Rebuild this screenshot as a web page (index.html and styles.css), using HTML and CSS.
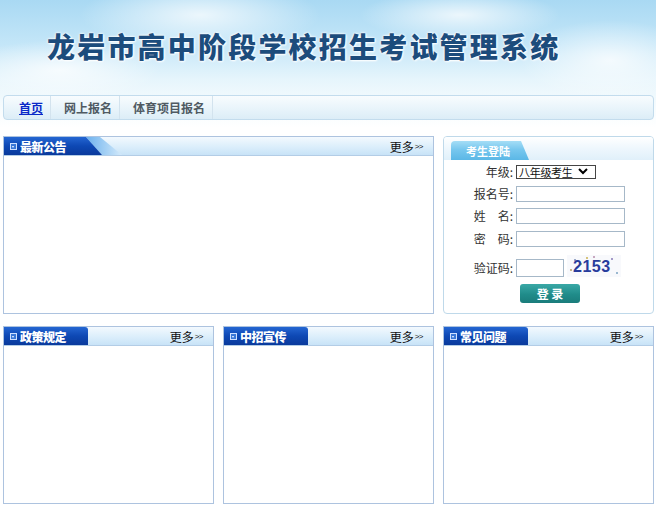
FILE: index.html
```html
<!DOCTYPE html>
<html lang="zh-CN">
<head>
<meta charset="utf-8">
<title>龙岩市高中阶段学校招生考试管理系统</title>
<link rel="stylesheet" href="styles.css">
</head>
<body>
<div class="top">
  <div class="banner">
    <span class="cloud c1"></span><span class="cloud c2"></span><span class="cloud c3"></span><span class="cloud c4"></span>
    <h1 class="title">龙岩市高中阶段学校招生考试管理系统</h1>
  </div>
  <div class="nav">
    <a class="nav-item active" href="#">首页</a>
    <a class="nav-item" href="#">网上报名</a>
    <a class="nav-item" href="#">体育项目报名</a>
  </div>
</div>

<div class="main">
  <div class="box wide">
    <div class="box-head">
      <span class="tab tab-slant"><i class="ico"></i>最新公告</span>
      <span class="stripe"></span>
      <a class="more" href="#">更多<small>&gt;&gt;</small></a>
    </div>
    <div class="box-body"></div>
  </div>

  <div class="login">
    <div class="login-head"><span class="login-tab">考生登陆</span></div>
    <form class="login-form">
      <div class="row r1"><label>年级:</label><span class="sel"><span class="sel-text">八年级考生</span><svg class="chev" viewBox="0 0 10 7" width="10" height="7"><path d="M1 1 L5 5 L9 1" fill="none" stroke="#000" stroke-width="2"/></svg></span></div>
      <div class="row r2"><label>报名号:</label><input class="txt" type="text"></div>
      <div class="row r3"><label>姓&emsp;名:</label><input class="txt" type="text"></div>
      <div class="row r4"><label>密&emsp;码:</label><input class="txt" type="password"></div>
      <div class="row code-row"><label>验证码:</label><input class="txt short" type="text"><span class="captcha">2153</span></div>
      <div class="btn-row"><button class="btn" type="button">登 录</button></div>
    </form>
  </div>

  <div class="box">
    <div class="box-head">
      <span class="tab"><i class="ico"></i>政策规定</span>
      <a class="more" href="#">更多<small>&gt;&gt;</small></a>
    </div>
    <div class="box-body"></div>
  </div>
  <div class="box">
    <div class="box-head">
      <span class="tab"><i class="ico"></i>中招宣传</span>
      <a class="more" href="#">更多<small>&gt;&gt;</small></a>
    </div>
    <div class="box-body"></div>
  </div>
  <div class="box">
    <div class="box-head">
      <span class="tab"><i class="ico"></i>常见问题</span>
      <a class="more" href="#">更多<small>&gt;&gt;</small></a>
    </div>
    <div class="box-body"></div>
  </div>
</div>
</body>
</html>
```
FILE: styles.css
```css
* { box-sizing: border-box; }
body {
  margin: 0;
  background: #ffffff;
  font-family: "Noto Sans CJK SC", "Liberation Sans", sans-serif;
  font-size: 12px;
  color: #333;
}
.top {
  position: relative;
  height: 128px;
  background: linear-gradient(180deg, #a9d9f3 0%, #c4e6f8 35%, #e6f5fc 62%, #f7fcfe 85%, #ffffff 100%);
  overflow: hidden;
}
.banner {
  position: relative;
  height: 94px;
}
.cloud {
  position: absolute;
  border-radius: 50%;
  background: radial-gradient(closest-side, rgba(255,255,255,0.75), rgba(255,255,255,0));
}
.c1 { left: 80px; top: -20px; width: 240px; height: 70px; }
.c2 { left: 360px; top: -10px; width: 200px; height: 50px; }
.c3 { left: 520px; top: 20px; width: 180px; height: 80px; }
.c4 { left: -40px; top: 40px; width: 200px; height: 60px; }
.title {
  position: relative;
  margin: 0;
  padding: 29px 0 0 47px;
  font-size: 28px;
  line-height: 35px;
  font-weight: 900;
  letter-spacing: 2.2px;
  color: #1c4c7c;
  text-shadow: 0 0 2px #fff, 0 0 3px #fff, 1px 1px 2px rgba(255,255,255,0.9);
  white-space: nowrap;
}
.nav {
  position: relative;
  margin: 1px 2px 0 3px;
  height: 25px;
  display: flex;
  align-items: center;
  padding-left: 3px;
  border: 1px solid #c3dced;
  border-radius: 4px;
  background: linear-gradient(180deg, #f8fcfe 0%, #eaf5fb 50%, #dcedf7 100%);
}
.nav-item {
  height: 23px;
  line-height: 23px;
  padding: 0 7px 0 12px;
  font-size: 12px;
  font-weight: 700;
  color: #4f5a63;
  text-decoration: none;
  border-right: 1px solid #d3e3ee;
}
.nav-item + .nav-item { padding: 0 7px 0 13px; }
.nav-item.active {
  color: #0a29c8;
  text-decoration: underline;
  padding: 0 7px 0 12px;
}
.main {
  width: 651px;
  margin: 8px 0 0 3px;
  display: grid;
  grid-template-columns: 211px 211px 211px;
  column-gap: 9px;
  row-gap: 12px;
}
.box {
  height: 178px;
  border: 1px solid #adc3df;
  background: #fff;
  display: flex;
  flex-direction: column;
}
.box.wide { grid-column: span 2; }
.box-head {
  position: relative;
  height: 19px;
  flex: none;
  display: flex;
  align-items: stretch;
  background: linear-gradient(180deg, #f3f9fe 0%, #dbeefb 55%, #c8e3f7 100%);
  border-bottom: 1px solid #b3cde6;
}
.tab {
  position: relative;
  z-index: 2;
  display: flex;
  align-items: center;
  width: 84px;
  padding-left: 6px;
  color: #fff;
  font-weight: 900;
  font-size: 12px;
  background: linear-gradient(180deg, #2466d2 0%, #0e48b4 50%, #0a3a9c 100%);
  border-top-right-radius: 3px;
  letter-spacing: -0.5px;
}
.tab-slant {
  width: 98px;
  border-radius: 0;
  clip-path: polygon(0 0, 82px 0, 98px 100%, 0 100%);
}
.stripe {
  position: absolute;
  z-index: 1;
  left: 82px;
  top: 0;
  width: 36px;
  height: 100%;
  background: linear-gradient(90deg, #6db1ee, #a9d3f5 60%, #d4eafb);
  clip-path: polygon(0 0, 14px 0, 36px 100%, 16px 100%);
}
.ico {
  display: inline-block;
  width: 7px;
  height: 7px;
  margin-right: 3px;
  border: 1px solid #cfe0ff;
  background: #3a78d8;
  position: relative;
}
.ico::after {
  content: "";
  position: absolute;
  left: 1px;
  top: 2px;
  border-left: 1.5px solid transparent;
  border-right: 1.5px solid transparent;
  border-top: 2px solid #fff;
}
.more {
  margin-left: auto;
  padding-right: 10px;
  display: flex;
  align-items: center;
  color: #111;
  text-decoration: none;
  font-size: 12px;
}
.more small {
  font-family: "Liberation Sans", sans-serif;
  font-size: 8px;
  margin-left: 1px;
  letter-spacing: -0.5px;
}
.box-body { flex: 1; }

.login {
  height: 178px;
  border: 1px solid #bfd9ea;
  border-radius: 4px;
  background: #fff;
  overflow: hidden;
}
.login-head {
  height: 23px;
  padding: 4px 0 0 7px;
  background: linear-gradient(180deg, #ffffff 0%, #eef7fd 50%, #e0f0fa 100%);
}
.login-tab {
  display: block;
  width: 78px;
  height: 19px;
  line-height: 20px;
  padding-left: 15px;
  color: #fff;
  font-size: 11px;
  font-weight: 700;
  border-radius: 4px 4px 0 0;
  background: linear-gradient(180deg, #a4ddf6 0%, #77c7ee 45%, #5bb7e6 100%);
  clip-path: polygon(0 0, 70px 0, 78px 100%, 0 100%);
}
.login-form {
  display: flex;
  flex-direction: column;
  padding-top: 4px;
}
.row {
  display: flex;
  align-items: center;
  height: 16px;
}
.row label {
  width: 72px;
  text-align: right;
  padding-right: 3px;
  font-size: 12px;
  line-height: 16px;
  color: #333;
}
.r1 { height: 15px; margin-bottom: 7px; }
.r2 { margin-bottom: 6px; }
.r3 { margin-bottom: 7px; }
.r4 { margin-bottom: 12px; }
.sel {
  display: flex;
  align-items: center;
  width: 80px;
  height: 14px;
  padding: 0 0 0 2px;
  border: 1px solid #444;
  background: #fff;
  color: #111;
  white-space: nowrap;
}
.sel-text {
  font-size: 11px;
  line-height: 12px;
  letter-spacing: -0.3px;
}
.chev { margin-left: 5px; flex: none; }
.txt {
  width: 109px;
  height: 16px;
  border: 1px solid #a6b8c8;
  padding: 0 2px;
  font-size: 12px;
}
.code-row { height: 18px; margin-bottom: 7px; }
.txt.short { width: 48px; height: 18px; }
.captcha {
  margin: -5px 0 0 3px;
  width: 54px;
  height: 22px;
  line-height: 24px;
  padding-left: 6px;
  font-family: "Liberation Sans", sans-serif;
  font-size: 16px;
  font-weight: 700;
  color: #283c9c;
  letter-spacing: 0.5px;
  background:
    radial-gradient(circle at 8px 5px, #9aa8c8 1px, transparent 1.5px),
    radial-gradient(circle at 20px 3px, #d6c37a 1px, transparent 1.5px),
    radial-gradient(circle at 33px 6px, #8fb2a0 1px, transparent 1.5px),
    radial-gradient(circle at 45px 4px, #a49ac8 1px, transparent 1.5px),
    radial-gradient(circle at 4px 15px, #c8b48a 1px, transparent 1.5px),
    radial-gradient(circle at 50px 18px, #9ab8d0 1px, transparent 1.5px),
    radial-gradient(circle at 27px 2px, #c8a8c0 1px, transparent 1.5px),
    radial-gradient(circle at 14px 9px, #b0c8a0 1px, transparent 1.5px),
    #f8f9fc;
}
.btn-row {
  display: flex;
  padding: 0 0 0 76px;
}
.btn {
  width: 60px;
  height: 19px;
  padding: 0;
  border: none;
  border-radius: 3px;
  font-family: inherit;
  font-size: 12px;
  font-weight: 700;
  color: #fff;
  line-height: 19px;
  background: linear-gradient(180deg, #3aa8a6 0%, #208c8a 55%, #1a7c7b 100%);
}
```
